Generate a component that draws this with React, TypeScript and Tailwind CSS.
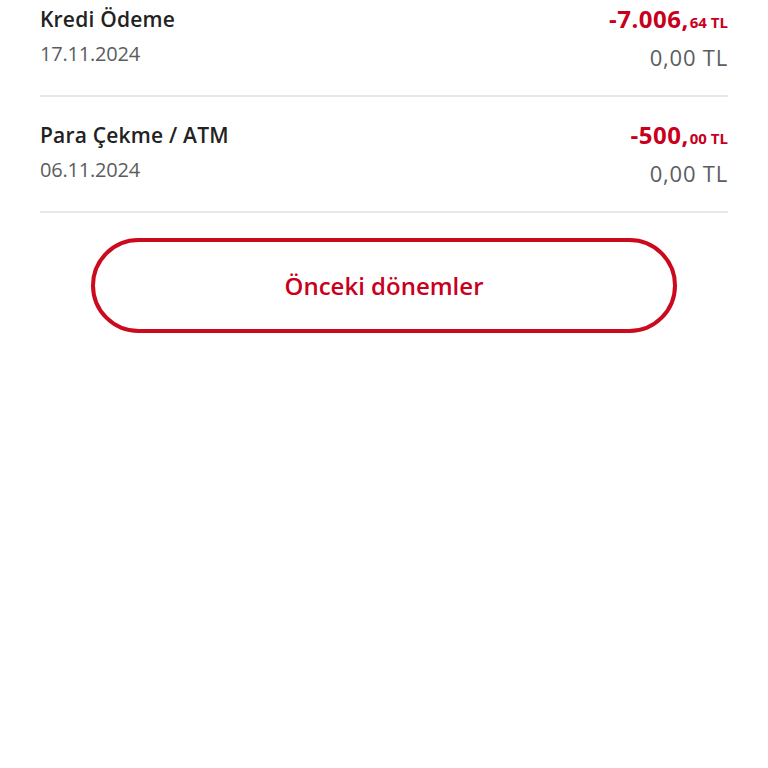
import React from "react";

interface Transaction {
  id: string;
  title: string;
  date: string;
  amountMain: string;
  amountCents: string;
  balance: string;
}

const transactions: Transaction[] = [
  { id: "t1", title: "Kredi Ödeme", date: "17.11.2024", amountMain: "-7.006,", amountCents: "64", balance: "0,00 TL" },
  { id: "t2", title: "Para Çekme / ATM", date: "06.11.2024", amountMain: "-500,", amountCents: "00", balance: "0,00 TL" },
];

export default function App() {
  return (
    <div className="min-h-[768px] bg-white font-['Open_Sans',sans-serif] overflow-hidden">
      <div className="px-10 -mt-[19px]">
        {transactions.map((tx) => (
          <div
            key={tx.id}
            className="flex justify-between border-b-2 border-[#e8e8e8] pt-[26px] pb-[26px]"
          >
            <div className="flex flex-col">
              <p className="text-[21px] leading-6 font-semibold tracking-[0.2px] text-[#222222]">{tx.title}</p>
              <p className="mt-[11px] text-[20px] leading-6 tracking-[-0.2px] text-[#5a5d61]">{tx.date}</p>
            </div>
            <div className="flex flex-col items-end">
              <p className="leading-6 text-[#c8001e] font-bold whitespace-nowrap">
                <span className="text-[24px] tracking-[0.5px]">{tx.amountMain}</span>
                <span className="text-[15px] ml-[1px]">{tx.amountCents} TL</span>
              </p>
              <p className="mt-[11px] text-[22px] leading-6 tracking-[0.8px] text-[#5a5d61]">{tx.balance}</p>
            </div>
          </div>
        ))}

        <div className="mx-[51px] mt-[25px]">
          <button className="w-full h-[95px] rounded-full border-[4px] border-[#cc0a1e] bg-white flex items-center justify-center">
            <span className="text-[24px] font-semibold text-[#c8001e]">Önceki dönemler</span>
          </button>
        </div>
      </div>
    </div>
  );
}
